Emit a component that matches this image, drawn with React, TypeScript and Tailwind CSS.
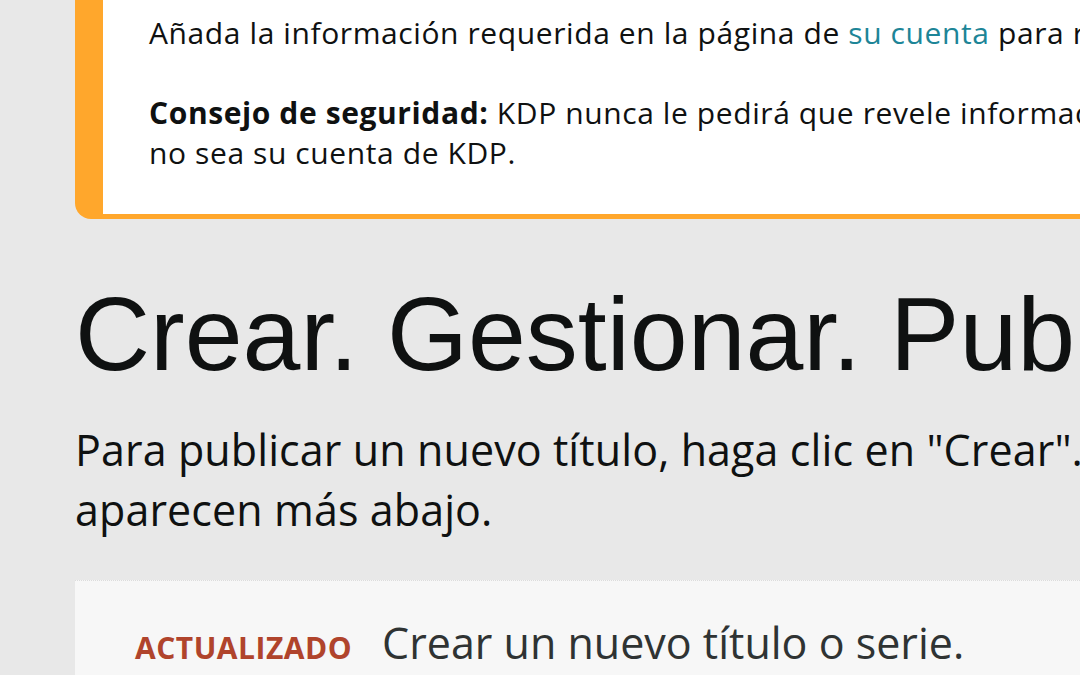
export default function App() {
  return (
    <div className="w-[1080px] h-[675px] overflow-hidden bg-[#e8e8e8] font-['Open_Sans',sans-serif] text-[#0f1111]">
      <div className="w-[1700px] pl-[75px] flex flex-col">
        {/* aviso */}
        <div className="bg-white border-l-[28px] border-b-[5px] border-[#ffa72c] rounded-bl-[16px] pl-[46px] pt-[13px] pb-[41px] text-[30px] leading-[40px] tracking-[0.6px] whitespace-nowrap">
          <p>
            Añada la información requerida en la página de{' '}
            <a className="text-[#1d8597]">su cuenta</a> para recibir pagos y poder publicar sus títulos.
          </p>
          <p className="mt-[40px]">
            <b className="font-bold">Consejo de seguridad:</b> KDP nunca le pedirá que revele información de su cuenta en un sitio web que
            <br />
            no sea su cuenta de KDP.
          </p>
        </div>

        <h1 className="mt-[63px] font-['Liberation_Sans',Arial,sans-serif] text-[104px] leading-[104px] whitespace-nowrap text-[#0f1111]">
          Crear. Gestionar. Publicar.
        </h1>

        <p className="mt-[34px] text-[43px] leading-[60px] tracking-[0.1px] whitespace-nowrap">
          Para publicar un nuevo título, haga clic en "Crear". Sus títulos existentes
          <br />
          aparecen más abajo.
        </p>

        <div className="mt-[40px] bg-[#f7f7f7] border-t border-dotted border-[#dcdcdc] pl-[60px] pt-[32px] pb-10">
          <div className="flex items-baseline gap-[30px] whitespace-nowrap">
            <span className="text-[30px] font-bold text-[#b0442c] tracking-[0.5px]">ACTUALIZADO</span>
            <span className="text-[43px] leading-[60px] text-[#2f3333]">Crear un nuevo título o serie.</span>
          </div>
        </div>
      </div>
    </div>
  );
}
